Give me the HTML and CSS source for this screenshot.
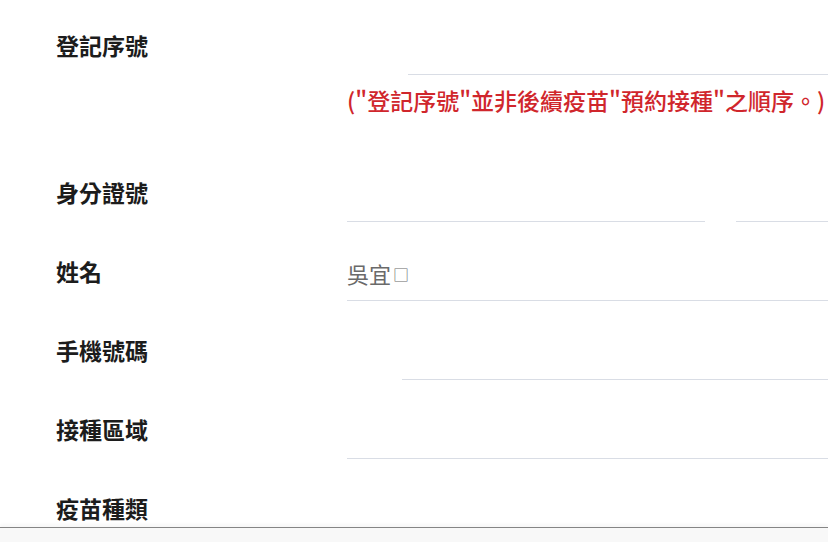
FILE: index.html
```html
<!DOCTYPE html>
<html lang="zh-Hant">

<head>
    <meta charset="UTF-8">
    <meta name="viewport" content="width=device-width, initial-scale=1.0">
    <title>疫苗接種登記</title>
    <link rel="stylesheet" href="styles.css">
</head>

<body>
    <form class="form">
        <div class="row">
            <label class="label">登記序號</label>
            <div class="field field-serial"></div>
        </div>
        <p class="note">("登記序號"並非後續疫苗"預約接種"之順序。)</p>

        <div class="row row-id">
            <label class="label">身分證號</label>
            <div class="field-pair">
                <div class="field field-id"></div>
                <div class="field"></div>
            </div>
        </div>

        <div class="row">
            <label class="label">姓名</label>
            <div class="field"><span class="value">吳宜<span class="tofu">□</span></span></div>
        </div>

        <div class="row">
            <label class="label">手機號碼</label>
            <div class="field field-phone"></div>
        </div>

        <div class="row">
            <label class="label">接種區域</label>
            <div class="field"></div>
        </div>

        <div class="row">
            <label class="label">疫苗種類</label>
            <div class="field"></div>
        </div>
    </form>
    <div class="footer"></div>
</body>

</html>
```

FILE: styles.css
```css
body {
    margin: 0;
    padding: 0;
    background: #fff;
    font-family: "Noto Sans CJK TC", "Noto Sans", sans-serif;
    overflow: hidden;
}

.form {
    padding: 19px 0 0 56px;
}

.row {
    display: grid;
    grid-template-columns: 291px 1fr;
    height: 56px;
    margin-top: 23px;
}

.row:first-child,
.row-id {
    margin-top: 0;
}

.label {
    display: flex;
    align-items: center;
    font-size: 23px;
    font-weight: 700;
    color: #1c1c1c;
    margin-top: -5px;
}

.field {
    box-sizing: border-box;
    height: 56px;
    border-bottom: 1px solid #d9dde5;
    display: flex;
    align-items: center;
}

.field-serial {
    margin-left: 61px;
}

.field-phone {
    margin-left: 55px;
}

.field-pair {
    display: flex;
    gap: 31px;
}

.field-pair .field {
    flex: 1;
}

.field-pair .field-id {
    flex: 0 0 358px;
}

.value {
    font-size: 22px;
    color: #6a6a6a;
}

.tofu {
    font-size: 16px;
    vertical-align: 2px;
    margin-left: 2px;
}

.note {
    margin: 10px 0 51px 291px;
    line-height: 30px;
    font-size: 23px;
    font-weight: 500;
    color: #d0262c;
    white-space: nowrap;
}

.footer {
    position: fixed;
    left: 0;
    right: 0;
    bottom: 0;
    height: 14px;
    background: #f8f8f8;
    border-top: 1px solid #858585;
    box-shadow: 0 -3px 3px rgba(0, 0, 0, 0.03);
}
```
